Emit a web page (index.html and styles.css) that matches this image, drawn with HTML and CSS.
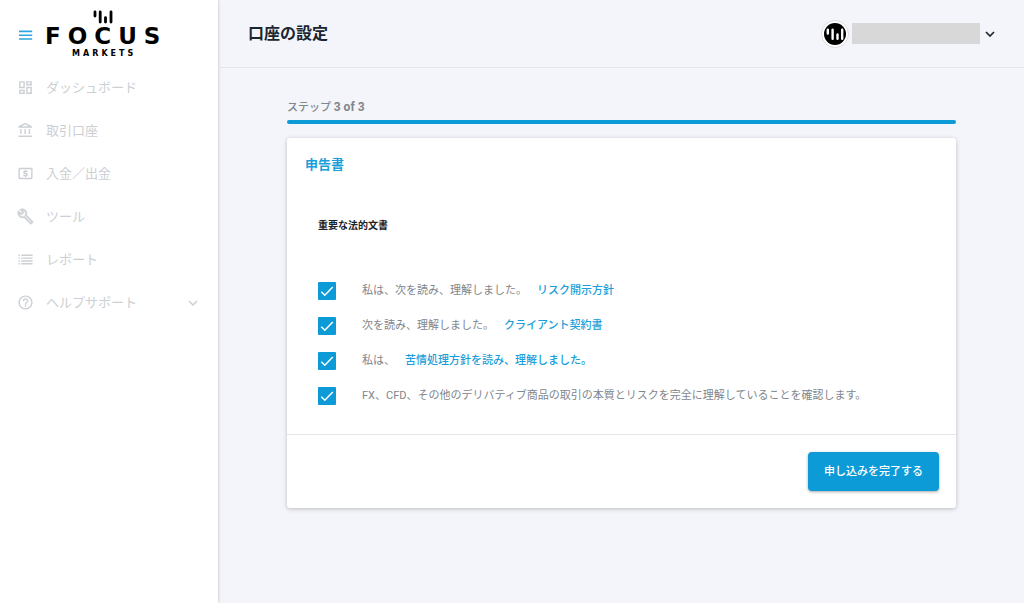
FILE: index.html
```html
<!DOCTYPE html>
<html lang="ja">
<head>
<meta charset="utf-8">
<meta name="viewport" content="width=device-width, initial-scale=1">
<title>口座の設定</title>
<link rel="stylesheet" href="styles.css">
</head>
<body>
<div class="app">
  <aside class="sidebar">
    <div class="brand">
      <button class="menu-toggle" type="button" aria-label="メニュー">
        <svg width="14" height="10" viewBox="0 0 14 10" stroke="currentColor" stroke-width="1.600"><path d="M0 1.400h13.200M0 5.200h13.200M0 9h13.200"/></svg>
      </button>
      <a class="logo" href="#">
        <svg class="logo-mark" width="20" height="14" viewBox="0 0 20 14" stroke="currentColor" stroke-width="2.8" stroke-linecap="round"><path d="M2 2v4M7.200 2v10M12.500 7.600v4.400M18 2v10"/></svg>
        <span class="logo-name">FOCUS</span>
        <span class="logo-sub">MARKETS</span>
      </a>
    </div>
    <nav class="nav">
      <a class="nav-item" href="#">
        <svg class="nav-icon" viewBox="0 0 24 24"><path d="M19 5v2h-4V5h4M9 5v6H5V5h4m10 8v6h-4v-6h4M9 17v2H5v-2h4M21 3h-8v6h8V3zM11 3H3v10h8V3zm10 8h-8v10h8V11zm-10 4H3v6h8v-6z"/></svg>
        <span>ダッシュボード</span>
      </a>
      <a class="nav-item" href="#">
        <svg class="nav-icon" viewBox="0 0 24 24"><path d="M6.500 10h-2v7h2v-7zm6 0h-2v7h2v-7zm8.500 9H2v2h19v-2zm-2.500-9h-2v7h2v-7zm-7-6.740L16.710 6H6.290l5.210-2.740m0-2.260L2 6v2h19V6l-9.500-5z"/></svg>
        <span>取引口座</span>
      </a>
      <a class="nav-item" href="#">
        <svg class="nav-icon" viewBox="0 0 24 24"><path d="M11 17h2v-1h1c.55 0 1-.45 1-1v-3c0-.55-.45-1-1-1h-3v-1h4V8h-2V7h-2v1h-1c-.55 0-1 .45-1 1v3c0 .55.45 1 1 1h3v1H9v2h2v1zm9-13H4c-1.110 0-1.990.89-1.990 2L2 18c0 1.110.89 2 2 2h16c1.110 0 2-.89 2-2V6c0-1.110-.89-2-2-2zm0 14H4V6h16v12z"/></svg>
        <span>入金／出金</span>
      </a>
      <a class="nav-item" href="#">
        <svg class="nav-icon" viewBox="0 0 24 24"><path d="M22.610 18.990l-9.080-9.080c.93-2.340.45-5.100-1.440-7C9.790.61 6.210.4 3.660 2.260L7.500 6.110 6.080 7.520 2.250 3.690C.39 6.230.6 9.820 2.900 12.110c1.860 1.860 4.570 2.350 6.890 1.480l9.110 9.110c.39.39 1.020.39 1.410 0l2.300-2.300c.4-.38.4-1.010 0-1.410zm-3 1.600l-9.460-9.460c-.61.45-1.290.72-2 .82-1.360.2-2.790-.21-3.830-1.250C3.370 9.760 2.930 8.500 3 7.260l3.090 3.090 4.240-4.240-3.090-3.090c1.240-.07 2.490.37 3.440 1.310 1.080 1.080 1.490 2.570 1.240 3.960-.12.71-.42 1.370-.88 1.960l9.450 9.450-.88.89z" stroke="currentColor" stroke-width=".6"/></svg>
        <span>ツール</span>
      </a>
      <a class="nav-item" href="#">
        <svg class="nav-icon" viewBox="0 0 24 24"><path d="M2 5h2v2H2zM2 9h2v2H2zM2 13h2v2H2zM2 17h2v2H2zM6 5h16v2H6zM6 9h16v2H6zM6 13h16v2H6zM6 17h16v2H6z"/></svg>
        <span>レポート</span>
      </a>
      <a class="nav-item" href="#">
        <svg class="nav-icon" viewBox="0 0 24 24"><path d="M11 18h2v-2h-2v2zm1-16C6.480 2 2 6.480 2 12s4.480 10 10 10 10-4.480 10-10S17.520 2 12 2zm0 18c-4.410 0-8-3.590-8-8s3.590-8 8-8 8 3.590 8 8-3.590 8-8 8zm0-14c-2.210 0-4 1.790-4 4h2c0-1.100.9-2 2-2s2 .9 2 2c0 2-3 1.750-3 5h2c0-2.250 3-2.500 3-5 0-2.210-1.790-4-4-4z"/></svg>
        <span>ヘルプサポート</span>
        <svg class="nav-chevron" width="10" height="6" viewBox="0 0 10 6" fill="none" stroke="currentColor" stroke-width="1.500"><path d="M1 1l4 4 4-4"/></svg>
      </a>
    </nav>
  </aside>

  <div class="content">
    <header class="topbar">
      <h1 class="page-title">口座の設定</h1>
      <button class="account" type="button" aria-label="アカウント">
        <svg width="28" height="28" viewBox="0 0 28 28"><circle cx="14" cy="14" r="13.500" fill="#fff" stroke="#dcdde0"/><circle cx="14" cy="14" r="11" fill="#000"/><path d="M6.800 9.700v3.800M11.600 9.700v9M16.500 14.500v4.200M21.200 9.700v9" stroke="#fff" stroke-width="2.400" stroke-linecap="round"/></svg>
        <span class="account-name"></span>
        <svg class="account-chevron" width="10" height="6" viewBox="0 0 10 6" fill="none" stroke="currentColor" stroke-width="1.700"><path d="M1 1l4 4 4-4"/></svg>
      </button>
    </header>

    <main class="page">
      <p class="step">ステップ <b>3 of 3</b></p>
      <div class="progress"></div>
      <form class="card">
        <div class="card-body">
          <h2 class="card-title">申告書</h2>
          <h3 class="section-title">重要な法的文書</h3>
          <div class="checks">
            <div class="check"><input type="checkbox" id="risk" checked><label for="risk">私は、次を読み、理解しました。</label><a href="#">リスク開示方針</a></div>
            <div class="check"><input type="checkbox" id="client" checked><label for="client">次を読み、理解しました。</label><a href="#">クライアント契約書</a></div>
            <div class="check"><input type="checkbox" id="complaint" checked><label for="complaint">私は、</label><a href="#">苦情処理方針を読み、理解しました。</a></div>
            <div class="check"><input type="checkbox" id="nature" checked><label for="nature">FX、CFD、その他のデリバティブ商品の取引の本質とリスクを完全に理解していることを確認します。</label></div>
          </div>
        </div>
        <div class="card-footer">
          <button class="submit" type="submit">申し込みを完了する</button>
        </div>
      </form>
    </main>
  </div>
</div>
</body>
</html>
```

FILE: styles.css
```css
* { box-sizing: border-box; }

body {
  margin: 0;
  background: #f4f5fa;
  color: #7f868c;
  font-family: Roboto, "Noto Sans CJK JP", sans-serif;
  font-size: 11px;
  line-height: 18px;
}

h1, h2, h3, p { margin: 0; }
a { text-decoration: none; }
button { border: 0; padding: 0; background: none; font: inherit; color: inherit; cursor: pointer; }
svg { display: block; flex: none; }

.app { display: flex; min-height: 100vh; }

.sidebar {
  flex: none;
  width: 218px;
  background: #fff;
  box-shadow: 0 0 3px rgba(0, 0, 0, 0.25);
}

.brand { display: flex; align-items: center; gap: 12px; padding: 10px 18px 6px 19px; }
.menu-toggle { color: #2aa7de; }
.logo { display: flex; flex-direction: column; align-items: center; color: #000; font-family: "DejaVu Sans", sans-serif; font-weight: 700; }
.logo-name { font-size: 23px; line-height: 24px; letter-spacing: 7px; margin-right: -7px; }
.logo-sub { font-size: 8px; line-height: 12px; letter-spacing: 3px; margin-right: -3px; }

.nav-item {
  display: flex;
  align-items: center;
  gap: 12px;
  height: 43px;
  padding: 0 20px 0 17px;
  color: #cccfd4;
  font-size: 13px;
}
.nav-icon { width: 17px; height: 17px; fill: currentColor; }
.nav-chevron { margin-left: auto; }

.content { flex: 1; min-width: 0; }

.topbar {
  display: flex;
  align-items: center;
  justify-content: space-between;
  height: 68px;
  padding: 0 29px 0 30px;
  border-bottom: 1px solid #e6e7eb;
}
.page-title { font-size: 16px; line-height: 24px; font-weight: 700; color: #1b2530; }
.account { display: flex; align-items: center; gap: 3px; color: #20262d; }
.account-name { width: 128px; height: 21px; background: #d8d8d8; }
.account-chevron { margin-left: 2px; }

.page { padding: 30px 68px 32px 69px; }
.step { padding-bottom: 3px; font-weight: 500; }
.step b { font-size: 12px; }
.progress { height: 4px; border-radius: 2px; background: #0d9bd8; }

.card {
  margin-top: 14px;
  border-radius: 3px;
  background: #fff;
  box-shadow: 0 1px 4px rgba(0, 0, 0, 0.24);
}
.card-body { padding: 17px 18px; }
.card-title { font-size: 13px; line-height: 20px; font-weight: 700; color: #1a9fda; }
.section-title { margin: 42px 13px 0; font-size: 10px; font-weight: 700; color: #1b2228; }
.checks { padding: 38px 13px 4px; }

.check { display: flex; align-items: center; height: 35px; }
.check input {
  appearance: none;
  flex: none;
  width: 18px;
  height: 18px;
  margin: 0 26px 0 0;
  border-radius: 1px;
  background: #0d9bd8 url("data:image/svg+xml,%3Csvg xmlns='http://www.w3.org/2000/svg' viewBox='0 0 18 18' fill='none' stroke='white' stroke-width='1.5'%3E%3Cpath d='M3.300 9.800l3.500 3.500 8-8.200'/%3E%3C/svg%3E") center / contain no-repeat;
}
.check a { margin-left: 10px; color: #1a9fda; font-weight: 500; }

.card-footer {
  display: flex;
  justify-content: flex-end;
  padding: 17px;
  border-top: 1px solid #e4e5e8;
}
.submit {
  height: 39px;
  padding: 0 16px;
  border-radius: 4px;
  background: #0d9bd8;
  color: #fff;
  font-weight: 500;
  box-shadow: 0 1px 3px rgba(0, 0, 0, 0.35);
}
```
